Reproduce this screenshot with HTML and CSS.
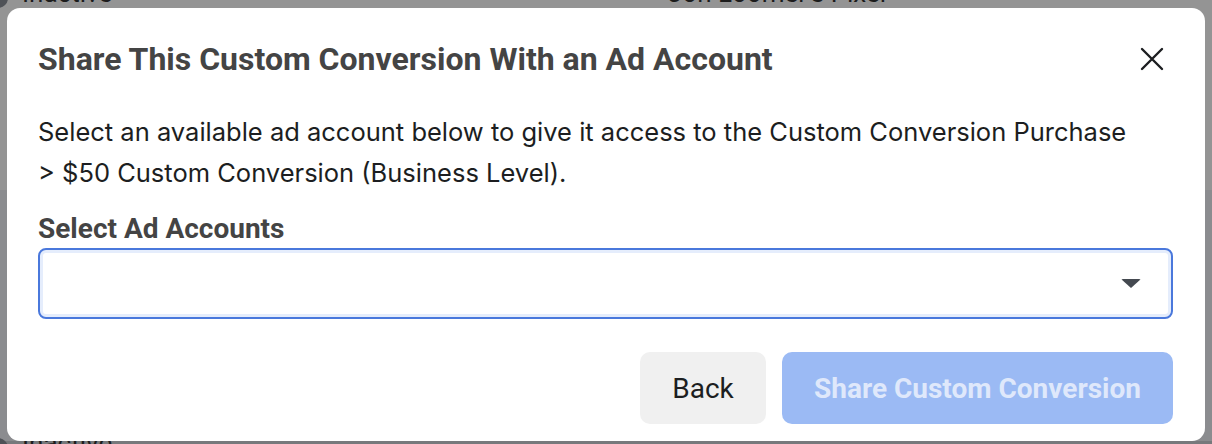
FILE: index.html
```html
<!DOCTYPE html>
<html lang="en">
<head>
  <meta charset="UTF-8" />
  <title>Share Custom Conversion</title>
  <link rel="stylesheet" href="styles.css">
</head>
<body>
  <!-- Page behind the dialog -->
  <div class="page">
    <div class="page-row top">
      <span class="toggle"></span>
      <span class="status">Inactive</span>
      <span class="pixel">Jon Loomer's Pixel</span>
    </div>
    <div class="page-row bottom">
      <span class="toggle"></span>
      <span class="status">Inactive</span>
    </div>
  </div>

  <div class="overlay">
    <div class="modal">
      <div class="modal-header">
        <h2>Share This Custom Conversion With an Ad Account</h2>
        <button class="close-btn" aria-label="Close">
          <svg width="24" height="24" viewBox="0 0 24 24">
            <path d="M2 2 L22 22 M22 2 L2 22" stroke="#1c1e21" stroke-width="2.4" stroke-linecap="round" fill="none"/>
          </svg>
        </button>
      </div>

      <p class="desc">Select an available ad account below to give it access to the Custom Conversion Purchase &gt; $50 Custom Conversion (Business Level).</p>

      <label class="field-label">Select Ad Accounts</label>
      <div class="select-box">
        <span class="caret"></span>
      </div>

      <div class="modal-footer">
        <button class="btn btn-back">Back</button>
        <button class="btn btn-share" disabled>Share Custom Conversion</button>
      </div>
    </div>
  </div>
</body>
</html>
```
FILE: styles.css
```css
body {
  margin: 0;
  height: 444px;
  overflow: hidden;
  background: #939393;
  font-family: Roboto, 'Liberation Sans', sans-serif;
}

/* Page behind */
.page {
  position: relative;
  height: 444px;
  background: linear-gradient(#949494 0, #949494 190px, #8b8c8f 190px, #8b8c8f 441px, #77797c 441px);
}

.page-row {
  position: absolute;
  left: 0;
  width: 100%;
  font-size: 26px;
  color: #1c1c1c;
}

.page-row.top { top: -22px; }
.page-row.bottom { top: 428px; }

.toggle {
  position: absolute;
  left: -12px;
  top: 10px;
  width: 20px;
  height: 20px;
  border-radius: 50%;
  background: #4f5257;
}

.status {
  position: absolute;
  left: 22px;
  top: 0;
}

.pixel {
  position: absolute;
  left: 668px;
  top: 0;
}

/* Dialog */
.overlay {
  position: fixed;
  top: 8px;
  left: 7px;
  width: 1198px;
  height: 433px;
}

.modal {
  box-sizing: border-box;
  height: 100%;
  background: #fff;
  border-radius: 13px;
  padding: 35px 32px 17px 31px;
}

.modal-header {
  display: flex;
  align-items: center;
  justify-content: space-between;
  height: 32px;
}

.modal-header h2 {
  margin: 0;
  font-size: 32px;
  font-weight: 700;
  color: #444;
  line-height: 32px;
}

.close-btn {
  background: none;
  border: 0;
  padding: 0;
  margin-right: 9px;
  width: 24px;
  height: 24px;
  cursor: pointer;
}

.desc {
  margin: 36px 0 0;
  max-width: 1100px;
  font-family: Inter, 'Liberation Sans', sans-serif;
  font-size: 25.5px;
  line-height: 41px;
  color: #1c1e21;
}

.field-label {
  display: block;
  margin-top: 20px;
  font-size: 28px;
  font-weight: 700;
  line-height: 32px;
  color: #444;
}

.select-box {
  box-sizing: border-box;
  margin-top: 3px;
  height: 71px;
  border: 2px solid #4a78dc;
  border-radius: 8px;
  box-shadow: inset 0 0 0 3px #e5edfc;
  display: flex;
  align-items: center;
  justify-content: flex-end;
  padding-right: 30px;
}

.caret {
  width: 0;
  height: 0;
  border-left: 10px solid transparent;
  border-right: 10px solid transparent;
  border-top: 9px solid #444950;
  border-radius: 2px;
}

.modal-footer {
  display: flex;
  justify-content: flex-end;
  gap: 16px;
  margin-top: 33px;
}

.btn {
  height: 72px;
  border: 0;
  border-radius: 10px;
  font-family: Roboto, 'Liberation Sans', sans-serif;
  font-size: 28px;
  cursor: pointer;
}

.btn-back {
  width: 126px;
  background: #f0f0f0;
  color: #1c1e21;
}

.btn-share {
  width: 391px;
  background: #9bbaf4;
  color: #dfe8fb;
  font-weight: 700;
}
```
